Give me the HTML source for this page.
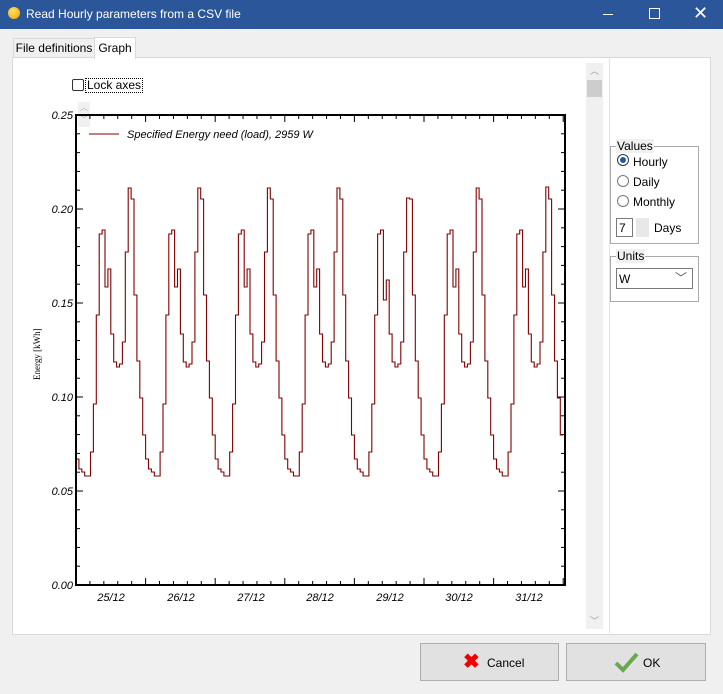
<!DOCTYPE html>
<html><head><meta charset="utf-8"><style>
body{margin:0;width:723px;height:694px;background:#f0f0f0;font-family:"Liberation Sans",sans-serif;font-size:12px;position:relative;overflow:hidden;color:#000}
.abs{position:absolute}
</style></head><body>
<div class="abs" style="left:0;top:0;width:723px;height:29px;background:#2b579a;color:#fff">
 <div class="abs" style="left:8px;top:7px;width:12px;height:12px;border-radius:50%;background:radial-gradient(circle at 40% 35%,#ffe066,#f0a000)"></div>
 <div class="abs" style="left:26px;top:7px;font-size:12px">Read Hourly parameters from a CSV file</div>
 <div class="abs" style="left:603px;top:14px;width:10px;height:1px;background:#fff"></div>
 <div class="abs" style="left:649px;top:8px;width:9px;height:9px;border:1px solid #fff"></div>
 <div class="abs" style="left:693px;top:3px;font-size:18px">✕</div>
</div>
<div class="abs" style="left:13px;top:38px;width:80px;height:19px;border:1px solid #d9d9d9;border-bottom:none;background:#f0f0f0;text-align:center;line-height:19px">File definitions</div>
<div class="abs" style="left:94px;top:37px;width:40px;height:21px;border:1px solid #d9d9d9;border-bottom:none;background:#fff;text-align:center;line-height:21px;z-index:2">Graph</div>
<div class="abs" style="left:12px;top:57px;width:697px;height:576px;border:1px solid #d9d9d9;background:#fff"></div>
<div class="abs" style="left:586px;top:63px;width:17px;height:566px;background:#f0f0f0"></div>
<div class="abs" style="left:587px;top:80px;width:15px;height:17px;background:#cdcdcd"></div>
<div class="abs" style="left:590px;top:64px;color:#999;font-size:9px">︿</div>
<div class="abs" style="left:590px;top:614px;color:#999;font-size:9px">﹀</div>
<div class="abs" style="left:609px;top:57px;width:1px;height:576px;background:#e3e3e3"></div>
<div class="abs" style="left:72px;top:79px;width:10px;height:10px;border:1px solid #333;border-radius:2px"></div>
<div class="abs" style="left:85px;top:78px;border:1px dotted #000;padding:0 1px;line-height:13px">Lock axes</div>
<div class="abs" style="left:78px;top:102px;width:12px;height:25px;background:#f0f0f0;color:#aaa;font-size:8px;text-align:center;line-height:12px">︿<br>﹀</div>
<svg class="abs" style="left:0;top:0" width="723" height="694" id="g">
 <g font-family="Liberation Sans" font-style="italic" font-size="11" fill="#000" text-anchor="end">
  <text x="73" y="119">0.25</text><text x="73" y="213">0.20</text><text x="73" y="307">0.15</text>
  <text x="73" y="401">0.10</text><text x="73" y="495">0.05</text><text x="73" y="589">0.00</text>
 </g>
 <g font-family="Liberation Sans" font-style="italic" font-size="11" text-anchor="middle">
  <text x="111" y="601">25/12</text><text x="181" y="601">26/12</text><text x="251" y="601">27/12</text>
  <text x="320" y="601">28/12</text><text x="390" y="601">29/12</text><text x="459" y="601">30/12</text><text x="529" y="601">31/12</text>
 </g>
 <text transform="translate(40,380) rotate(-90)" font-family="Liberation Serif" font-size="9">Energy  [kWh]</text>
 <line x1="89" y1="134" x2="119" y2="134" stroke="#800000" stroke-width="1"/>
 <text x="127" y="138" font-family="Liberation Sans" font-style="italic" font-size="11">Specified Energy need (load),  2959 W</text>
 <g id="ticks" stroke="#000" stroke-width="1"></g>
 <path id="p" fill="none" stroke="#800000" stroke-width="1.1"/>
 <rect x="76" y="115" width="489" height="470" fill="none" stroke="#000" stroke-width="2"/>
</svg>
<div class="abs" style="left:610px;top:146px;width:87px;height:96px;border:1px solid #aaa"></div>
<div class="abs" style="left:616px;top:139px;background:#f0f0f0;padding:0 1px">Values</div>
<div class="abs" style="left:617px;top:154px;width:10px;height:10px;border:1px solid #333;border-radius:50%;background:#fff"><div style="margin:2px;width:6px;height:6px;border-radius:50%;background:#1e5aa8"></div></div>
<div class="abs" style="left:633px;top:155px">Hourly</div>
<div class="abs" style="left:617px;top:175px;width:10px;height:10px;border:1px solid #777;border-radius:50%;background:#fff"></div>
<div class="abs" style="left:633px;top:175px">Daily</div>
<div class="abs" style="left:617px;top:195px;width:10px;height:10px;border:1px solid #777;border-radius:50%;background:#fff"></div>
<div class="abs" style="left:633px;top:195px">Monthly</div>
<div class="abs" style="left:616px;top:218px;width:15px;height:19px;border:1px solid #7a7a7a;background:#fff;line-height:19px;padding-left:2px;box-sizing:border-box;width:17px">7</div>
<div class="abs" style="left:636px;top:218px;width:13px;height:19px;background:#e8e8e8"></div>
<div class="abs" style="left:654px;top:221px">Days</div>
<div class="abs" style="left:610px;top:256px;width:87px;height:44px;border:1px solid #aaa"></div>
<div class="abs" style="left:616px;top:249px;background:#f0f0f0;padding:0 1px">Units</div>
<div class="abs" style="left:616px;top:268px;width:75px;height:21px;border:1px solid #7a7a7a;background:#fff;line-height:21px;padding-left:2px;box-sizing:border-box;width:77px">W<span style="position:absolute;right:5px;top:-1px;color:#555">﹀</span></div>
<div class="abs" style="left:420px;top:643px;width:137px;height:36px;border:1px solid #adadad;background:#e1e1e1"></div>
<div class="abs" style="left:463px;top:652px;color:#e00;font-size:20px;font-weight:bold;line-height:20px">✖</div>
<div class="abs" style="left:487px;top:656px">Cancel</div>
<div class="abs" style="left:566px;top:643px;width:138px;height:36px;border:1px solid #adadad;background:#e1e1e1"></div>
<svg class="abs" style="left:614px;top:651px" width="26" height="22"><path d="M2 12 L9 19 L23 3" stroke="#6aa84f" stroke-width="4" fill="none"/></svg>
<div class="abs" style="left:643px;top:656px">OK</div>
<script>
var hy=[459,469,472,476,476,452,404,315,234,230,287,269,334,362,367,364,342,252,188,199,295,361,398,435];
var d="",x0=76,dw=69.6,hw=dw/24;
var first=true;
for(var k=0;k<7;k++)for(var h=0;h<24;h++){
 var xa=x0+k*dw+h*hw,xb=Math.min(xa+hw,564);
 if(xa>=564)break;
 var y=hy[h];
 if(k==4){if(h==18)y=198;if(h==10)y=300;if(h==11)y=280;}
 if(k==6&&h==18)y=187;
 d+=(first?"M":"L")+xa.toFixed(1)+" "+y+"L"+xb.toFixed(1)+" "+y;first=false;
}
document.getElementById("p").setAttribute("d",d);
var t="";
for(var i=0;i<=25;i++){var y=585-i*18.8,l=(i%5==0)?7:4;
 t+='<line x1="76" y1="'+y+'" x2="'+(76+l)+'" y2="'+y+'"/><line x1="565" y1="'+y+'" x2="'+(565-l)+'" y2="'+y+'"/>';}
for(var i=0;i<=35;i++){var x=76+i*13.92,l=(i%5==0)?7:4;if(x>565)break;
 t+='<line x1="'+x+'" y1="585" x2="'+x+'" y2="'+(585-l)+'"/><line x1="'+x+'" y1="115" x2="'+x+'" y2="'+(115+l)+'"/>';}
document.getElementById("ticks").innerHTML=t;
</script>
</body></html>
